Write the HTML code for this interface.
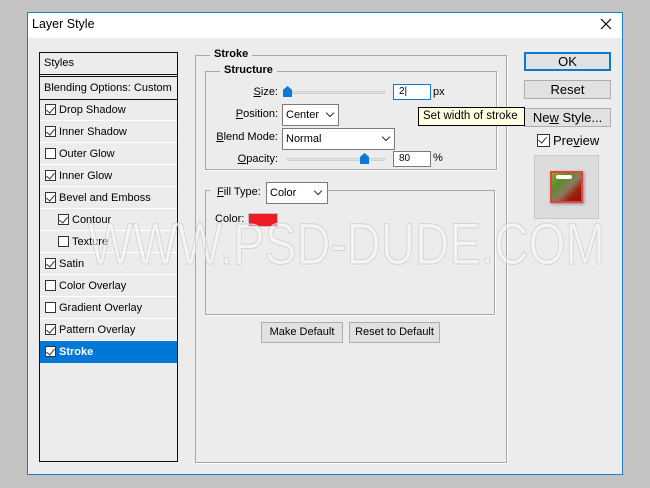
<!DOCTYPE html>
<html><head><meta charset="utf-8"><style>
*{margin:0;padding:0;box-sizing:border-box}
body{width:650px;height:488px;background:#c3c3c3;position:relative;overflow:hidden;font-family:"Liberation Sans",sans-serif;font-size:11px;color:#000}
.a{position:absolute}
.dlg{left:27px;top:12px;width:596px;height:463px;background:#ececec;border:1px solid #1a7fd6}
.title{left:28px;top:13px;width:594px;height:25px;background:#fff}
.cb{position:absolute;width:11px;height:11px;border:1px solid #333;background:#fff}
.cb.c::after{content:"";position:absolute;left:2px;top:0px;width:4px;height:7px;border:solid #333;border-width:0 1.2px 1.2px 0;transform:rotate(40deg)}
.row{position:absolute;left:40px;width:137px;height:22px;border-bottom:1px solid #fff}
.row span{position:absolute;top:5px}
.grp{position:absolute;border:1px solid #a8a8a8;box-shadow:1px 1px 0 #fff}
.lg{position:absolute;background:#ececec;font-weight:bold;padding:0 4px}
.lbl{position:absolute;text-align:right}
.sel{position:absolute;background:#fff;border:1px solid #7a7a7a;padding:4px 3px}
.chev{position:absolute;width:6px;height:6px;border:solid #333;border-width:0 1px 1px 0;transform:rotate(45deg)}
.inp{position:absolute;background:#fff;border:1px solid #7a7a7a;padding:2px 5px}
.track{position:absolute;height:3px;background:#e2e2e2;border:1px solid #d0d0d0}
.thumb{position:absolute;width:9px;height:11px;background:#0a78d7;clip-path:polygon(50% 0,100% 35%,100% 100%,0 100%,0 35%)}
.btn{position:absolute;background:#e1e1e1;border:1px solid #adadad;text-align:center;font-size:13px}
u{text-decoration:underline}
</style></head><body>
<div class="a dlg"></div>
<div class="a title"></div>
<div class="a" style="left:32px;top:17px;font-size:12.5px">Layer Style</div>
<svg class="a" style="left:600px;top:18px" width="12" height="12"><path d="M1 1L11 11M11 1L1 11" stroke="#000" stroke-width="1.2"/></svg>

<!-- styles list -->
<div class="a" style="left:39px;top:52px;width:139px;height:410px;border:1px solid #111;background:#ececec"></div>
<div class="a" style="left:40px;top:74px;width:137px;height:3px;border-top:1px solid #111;border-bottom:1px solid #111"></div>
<div class="a" style="left:40px;top:99px;width:137px;height:1px;background:#111"></div>
<div class="a" style="left:44px;top:57px">Styles</div>
<div class="a" style="left:44px;top:82px">Blending Options: Custom</div>

<div class="row" style="top:99px"><div class="cb c" style="left:5px;top:5px"></div><span style="left:19px">Drop Shadow</span></div>
<div class="row" style="top:121px"><div class="cb c" style="left:5px;top:5px"></div><span style="left:19px">Inner Shadow</span></div>
<div class="row" style="top:143px"><div class="cb" style="left:5px;top:5px"></div><span style="left:19px">Outer Glow</span></div>
<div class="row" style="top:165px"><div class="cb c" style="left:5px;top:5px"></div><span style="left:19px">Inner Glow</span></div>
<div class="row" style="top:187px"><div class="cb c" style="left:5px;top:5px"></div><span style="left:19px">Bevel and Emboss</span></div>
<div class="row" style="top:209px"><div class="cb c" style="left:18px;top:5px"></div><span style="left:32px">Contour</span></div>
<div class="row" style="top:231px"><div class="cb" style="left:18px;top:5px"></div><span style="left:32px">Texture</span></div>
<div class="row" style="top:253px"><div class="cb c" style="left:5px;top:5px"></div><span style="left:19px">Satin</span></div>
<div class="row" style="top:275px"><div class="cb" style="left:5px;top:5px"></div><span style="left:19px">Color Overlay</span></div>
<div class="row" style="top:297px"><div class="cb" style="left:5px;top:5px"></div><span style="left:19px">Gradient Overlay</span></div>
<div class="row" style="top:319px"><div class="cb c" style="left:5px;top:5px"></div><span style="left:19px">Pattern Overlay</span></div>
<div class="row" style="top:341px;background:#0078d7;color:#fff;font-weight:bold;border:none"><div class="cb c" style="left:5px;top:5px"></div><span style="left:19px">Stroke</span></div>

<!-- stroke group -->
<div class="grp" style="left:195px;top:55px;width:312px;height:408px"></div>
<div class="lg" style="left:210px;top:48px">Stroke</div>
<div class="grp" style="left:205px;top:71px;width:292px;height:99px"></div>
<div class="lg" style="left:220px;top:64px">Structure</div>

<div class="lbl" style="left:200px;width:78px;top:86px"><u>S</u>ize:</div>
<div class="track" style="left:287px;top:91px;width:98px"></div>
<div class="thumb" style="left:283px;top:86px"></div>
<div class="inp" style="left:393px;top:84px;width:38px;height:16px;border-color:#0a78d7;font-size:10px;line-height:10px">2|</div>
<div class="a" style="left:433px;top:86px">px</div>

<div class="lbl" style="left:200px;width:78px;top:108px"><u>P</u>osition:</div>
<div class="sel" style="left:282px;top:104px;width:57px;height:22px">Center</div>
<div class="chev" style="left:327px;top:110px"></div>

<div class="lbl" style="left:200px;width:78px;top:131px"><u>B</u>lend Mode:</div>
<div class="sel" style="left:282px;top:128px;width:113px;height:22px">Normal</div>
<div class="chev" style="left:383px;top:134px"></div>

<div class="lbl" style="left:200px;width:78px;top:153px"><u>O</u>pacity:</div>
<div class="track" style="left:287px;top:158px;width:98px"></div>
<div class="thumb" style="left:360px;top:153px"></div>
<div class="inp" style="left:393px;top:151px;width:38px;height:16px;font-size:10px;line-height:10px">80</div>
<div class="a" style="left:433px;top:152px">%</div>

<div class="grp" style="left:205px;top:190px;width:290px;height:125px"></div>
<div class="a" style="left:210px;top:182px;width:56px;height:18px;background:#ececec"></div>
<div class="a" style="left:217px;top:186px"><u>F</u>ill Type:</div>
<div class="sel" style="left:266px;top:182px;width:62px;height:22px">Color</div>
<div class="chev" style="left:315px;top:188px"></div>
<div class="a" style="left:215px;top:213px">Color:</div>
<div class="a" style="left:248px;top:213px;width:30px;height:14px;background:#ee1c24;border:1px solid #c0c0c0"></div>

<div class="btn" style="left:261px;top:322px;width:82px;height:21px;font-size:11px;line-height:19px">Make Default</div>
<div class="btn" style="left:349px;top:322px;width:91px;height:21px;font-size:11px;line-height:19px">Reset to Default</div>

<!-- right -->
<div class="btn" style="left:524px;top:52px;width:87px;height:19px;border:2px solid #0a78d7;line-height:15px">OK</div>
<div class="btn" style="left:524px;top:80px;width:87px;height:19px;line-height:17px">Reset</div>
<div class="btn" style="left:524px;top:108px;width:87px;height:19px;line-height:17px">Ne<u>w</u> Style...</div>
<div class="a" style="left:418px;top:107px;width:107px;height:19px;background:#ffffe1;border:1px solid #000;padding:2px 4px;font-size:11.5px">Set width of stroke</div>
<div class="cb c" style="left:537px;top:134px;width:13px;height:13px"></div>
<div class="a" style="left:553px;top:133px;font-size:13px">Pre<u>v</u>iew</div>
<div class="a" style="left:534px;top:155px;width:65px;height:64px;background:#dcdcdc;border:1px solid #c8c8c8"></div>
<div class="a" style="left:550px;top:171px;width:33px;height:32px;border:2px solid #e84040;background:linear-gradient(135deg,#8aaa20 0%,#5a8a30 30%,#8a7a60 55%,#a02010 75%,#8a1010 100%);box-shadow:1px 1px 3px #888"></div>
<div class="a" style="left:556px;top:175px;width:16px;height:4px;background:#fff;border-radius:2px"></div>

<!-- watermark -->
<svg class="a" style="left:0;top:0" width="650" height="488"><text x="88" y="264" textLength="517" lengthAdjust="spacingAndGlyphs" font-family="Liberation Sans, sans-serif" font-size="58" fill="rgba(255,255,255,0.45)" stroke="#d4d4d4" stroke-width="1">WWW.PSD-DUDE.COM</text></svg>
</body></html>
